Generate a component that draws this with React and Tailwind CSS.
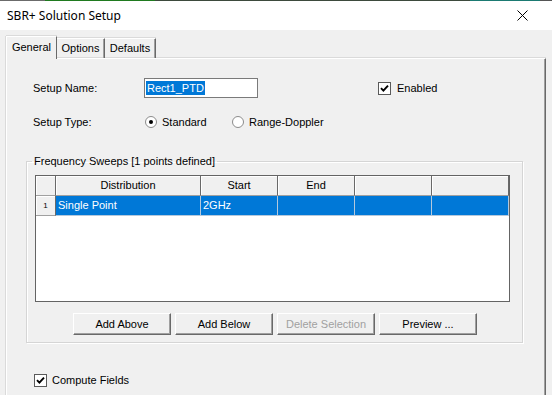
import React from "react";

function CheckBox() {
  return (
    <span className="flex h-[13px] w-[13px] shrink-0 items-center justify-center border border-[#5a5a5a] bg-white">
      <svg width="9" height="9" viewBox="0 0 9 9">
        <path d="M1 4.2 L3.4 6.6 L8 1.6" stroke="#000" strokeWidth="1.9" fill="none" />
      </svg>
    </span>
  );
}

function Radio({ on }) {
  return (
    <span className="flex h-[12px] w-[12px] shrink-0 items-center justify-center rounded-full border border-[#8c8c8c] bg-white">
      {on && <span className="h-[4px] w-[4px] rounded-full bg-black" />}
    </span>
  );
}

function Btn({ children, disabled }) {
  return (
    <button
      className={
        disabled
          ? "flex h-[22px] w-[98px] items-center justify-center border border-t-white border-l-white border-r-[#696969] border-b-[#696969] bg-[#f0f0f0] text-[#a0a0a0] shadow-[inset_-1px_-1px_0_#a0a0a0]"
          : "flex h-[22px] w-[98px] items-center justify-center border border-t-white border-l-white border-r-[#696969] border-b-[#696969] bg-[#f0f0f0] text-black shadow-[inset_-1px_-1px_0_#a0a0a0]"
      }
    >
      {children}
    </button>
  );
}

const headCell =
  "flex h-[20px] items-center justify-center border-r border-b border-r-[#696969] border-b-[#a0a0a0] bg-[#f0f0f0] shadow-[inset_1px_1px_0_#ffffff]";

export default function App() {
  return (
    <div className="h-[395px] w-[552px] overflow-hidden bg-[#f0f0f0] font-['Liberation_Sans',Arial,sans-serif] text-[11px] text-black">
      {/* top strip */}
      <div className="flex h-[1px]">
        <div className="w-[45px] bg-[#6b6b6b]" />
        <div className="w-[110px] bg-[#1f7a1f]" />
        <div className="w-[315px] bg-[#3d4a3d]" />
        <div className="w-[70px] bg-[#1b7a72]" />
        <div className="flex-1 bg-[#555]" />
      </div>

      {/* title bar */}
      <div className="flex h-[29px] items-center justify-between bg-white pl-[7px] pr-[24px]">
        <span className="font-['Noto_Sans',sans-serif] text-[12px]">SBR+ Solution Setup</span>
        <svg width="11" height="11" viewBox="0 0 11 11">
          <path d="M0.5 0.5 L10.5 10.5 M10.5 0.5 L0.5 10.5" stroke="#000" strokeWidth="1" />
        </svg>
      </div>

      {/* tabs */}
      <div className="flex h-[28px] items-end pl-[6px]">
        <div className="relative z-10 -mb-[1px] flex h-[23px] w-[51px] items-center justify-center border-t border-l border-r border-t-white border-l-white border-r-[#696969] bg-[#f0f0f0] pb-[2px] shadow-[0_-1px_0_#dadada,-1px_0_0_#dadada]">
          General
        </div>
        <div className="flex h-[20px] w-[48px] items-center justify-center border-t border-r border-t-white border-r-[#696969] shadow-[0_-1px_0_#dadada,inset_-1px_0_0_#a0a0a0]">
          Options
        </div>
        <div className="flex h-[20px] w-[51px] items-center justify-center border-t border-r border-t-white border-r-[#696969] shadow-[0_-1px_0_#dadada,inset_-1px_0_0_#a0a0a0]">
          Defaults
        </div>
      </div>

      {/* panel */}
      <div className="ml-[6px] h-[340px] w-[540px] border-t border-l border-r border-t-white border-l-white border-r-[#696969] shadow-[inset_-1px_0_0_#a0a0a0,0_-1px_0_#dadada,-1px_0_0_#dadada]">
        <div className="mt-[19px] flex h-[20px] items-center pl-[26px]">
          <span className="w-[111px]">Setup Name:</span>
          <div className="flex h-[20px] w-[114px] items-center border border-[#7a7a7a] bg-white pl-[1px]">
            <span className="bg-[#0078d7] px-[1px] leading-[14px] text-white">Rect1_PTD</span>
          </div>
          <div className="ml-[120px] flex items-center gap-[6px]">
            <CheckBox />
            <span>Enabled</span>
          </div>
        </div>

        <div className="mt-[14px] flex h-[20px] items-center pl-[26px]">
          <span className="w-[112px]">Setup Type:</span>
          <div className="flex w-[87px] items-center gap-[5px]">
            <Radio on />
            <span>Standard</span>
          </div>
          <div className="flex items-center gap-[5px]">
            <Radio />
            <span>Range-Doppler</span>
          </div>
        </div>

        <fieldset className="ml-[19px] mt-[23px] w-[497px] border border-[#d5d5d5] pb-[7px] pl-[8px] shadow-[inset_1px_1px_0_#ffffff,1px_1px_0_#ffffff]">
          <legend className="-ml-[3px] px-[2px] leading-[13px]">Frequency Sweeps [1 points defined]</legend>

          <div className="mt-[7px] h-[127px] w-[475px] border border-[#646464] bg-white">
            <div className="grid grid-cols-[20px_145px_77px_77px_77px_77px]">
              <div className={headCell} />
              <div className={headCell}>Distribution</div>
              <div className={headCell}>Start</div>
              <div className={headCell}>End</div>
              <div className={headCell} />
              <div className={headCell} />

              <div className="flex h-[20px] items-center justify-center border-r border-b border-r-[#696969] border-b-[#a0a0a0] bg-[#f0f0f0] text-[8px] shadow-[inset_1px_1px_0_#ffffff]">
                1
              </div>
              <div className="flex h-[20px] items-center border-r border-b border-[#b4c8dc] bg-[#0078d7] pl-[2px] text-white">
                Single Point
              </div>
              <div className="flex h-[20px] items-center border-r border-b border-[#b4c8dc] bg-[#0078d7] pl-[2px] text-white">
                2GHz
              </div>
              <div className="h-[20px] border-r border-b border-[#b4c8dc] bg-[#0078d7]" />
              <div className="h-[20px] border-r border-b border-[#b4c8dc] bg-[#0078d7]" />
              <div className="h-[20px] border-r border-b border-[#b4c8dc] bg-[#0078d7]" />
            </div>
          </div>

          <div className="mt-[11px] flex gap-[4px] pl-[38px]">
            <Btn>Add Above</Btn>
            <Btn>Add Below</Btn>
            <Btn disabled>Delete Selection</Btn>
            <Btn>Preview ...</Btn>
          </div>
        </fieldset>

        <div className="mt-[29px] flex items-center gap-[5px] pl-[27px]">
          <CheckBox />
          <span>Compute Fields</span>
        </div>
      </div>
    </div>
  );
}
